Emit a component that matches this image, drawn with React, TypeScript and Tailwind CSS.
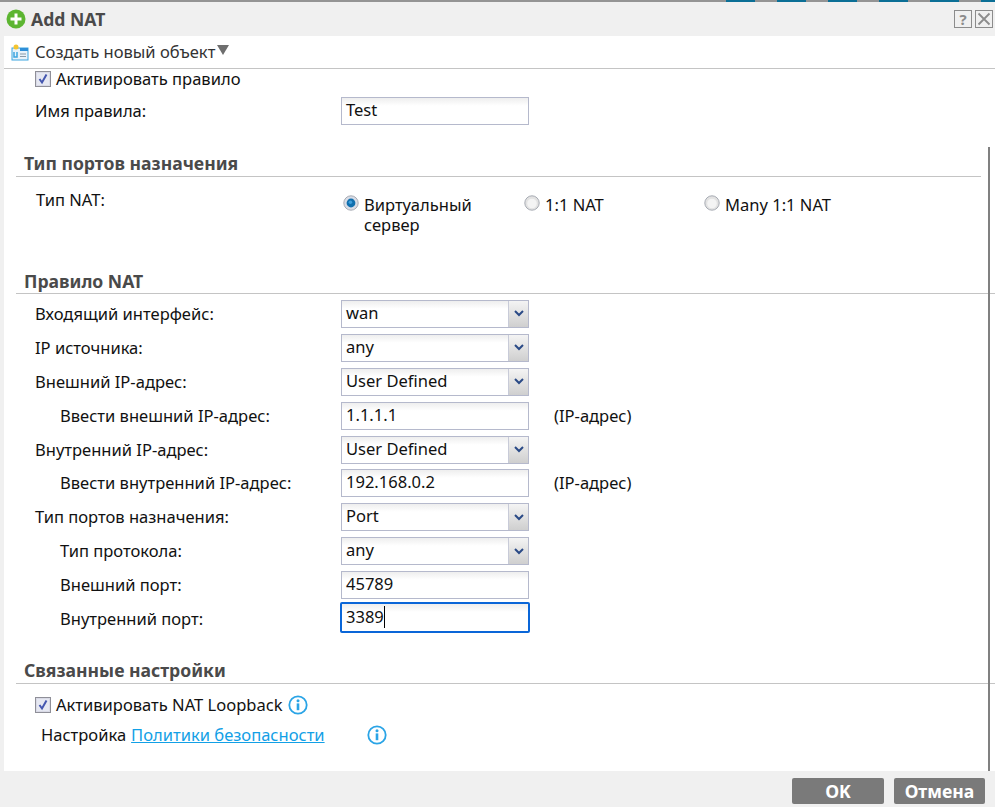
const font = { fontFamily: '"Noto Sans", "Liberation Sans", sans-serif' };

const Section = ({ title, className }: { title: string; className: string }) => (
    <div className={`ml-3 border-b border-[#c4c4c4] pl-2 ${className}`}>
        <div className="text-[17.6px] font-bold leading-[20px] text-[#4a4a4a]">{title}</div>
    </div>
);

const Checkbox = () => (
    <svg width="16" height="16" viewBox="0 0 16 16" className="shrink-0">
        <rect x="0.5" y="0.5" width="15" height="15" fill="#d9dae6" stroke="#8f8f98" />
        <rect x="2" y="2" width="12" height="12" fill="#e6e8f2" />
        <path d="M4.5 8 L7 11.5 L11.5 3.5" fill="none" stroke="#4557b0" strokeWidth="2" />
    </svg>
);

const Radio = ({ on }: { on?: boolean }) => (
    <svg width="16" height="16" viewBox="0 0 16 16" className="shrink-0">
        <circle cx="8" cy="8" r="7.2" fill={on ? "#d8dce6" : "#e2e2e2"} stroke="#a8acb4" />
        {on ? (
            <>
                <circle cx="8" cy="8" r="4.4" fill="#0f6fae" />
                <circle cx="7.4" cy="7.2" r="1.8" fill="#3f9fdc" />
            </>
        ) : (
            <circle cx="8" cy="8.5" r="4.8" fill="#f4f4f4" />
        )}
    </svg>
);

const Info = () => (
    <svg width="20" height="20" viewBox="0 0 20 20" className="shrink-0">
        <circle cx="10" cy="10" r="8.7" fill="none" stroke="#2aa4e6" strokeWidth="1.8" />
        <circle cx="10" cy="5.8" r="1.5" fill="#2aa4e6" />
        <rect x="8.7" y="8.4" width="2.6" height="6.8" fill="#2aa4e6" />
    </svg>
);

const Row = ({ label, sub, children, note }: { label: string; sub?: boolean; children: React.ReactNode; note?: boolean }) => (
    <div className="flex h-[33.9px] items-center">
        <div className={`w-[321px] ${sub ? "pl-[40px]" : "pl-[15px]"}`}>{label}</div>
        {children}
        {note && <span className="ml-[25px]">(IP-адрес)</span>}
    </div>
);

const Input = ({ value }: { value: string }) => (
    <div className="flex h-[28px] w-[188px] items-center border border-[#b5b9cc] bg-gradient-to-b from-[#eeeeee] to-white to-30% pb-[2px] pl-1">
        {value}
    </div>
);

const Select = ({ value }: { value: string }) => (
    <div className="flex h-[28px] w-[188px] items-center border border-[#b5b9cc] bg-gradient-to-b from-[#eeeeee] to-white to-30%">
        <span className="flex-1 pb-[2px] pl-1">{value}</span>
        <span className="flex h-full w-[20px] items-center justify-center border-l border-[#c8cbd8] bg-gradient-to-b from-[#f4f4f4] to-[#cfcfcf]">
            <svg width="10" height="7" viewBox="0 0 10 7">
                <path d="M1 1 L5 5 L9 1" fill="none" stroke="#2a4a86" strokeWidth="2" />
            </svg>
        </span>
    </div>
);

const topStrip = [726, 777, 828, 879, 930, 981];

export default function App() {
    return (
        <div className="flex h-[807px] w-[995px] flex-col overflow-hidden bg-[#f0f0f0] text-[16.55px] leading-[20px] text-[#111]" style={font}>
            {/* top edge of the page behind the dialog */}
            <div className="flex h-[2px] shrink-0 bg-[#949494] pl-[726px]">
                {topStrip.map((x) => (
                    <div key={x} className="mr-[22px] h-full w-[29px] shrink-0 bg-[#0b6f96]"></div>
                ))}
            </div>

            {/* Title bar */}
            <div className="flex h-[34px] shrink-0 items-center pl-[6px] pr-[2px]">
                <svg width="20" height="20" viewBox="0 0 20 20">
                    <circle cx="10" cy="10" r="9.5" fill="#5cb531" />
                    <rect x="4.5" y="8.5" width="11" height="3" fill="#fff" />
                    <rect x="8.5" y="4.5" width="3" height="11" fill="#fff" />
                </svg>
                <span className="ml-[5px] flex-1 text-[17.6px] font-bold text-[#4a4a4a]">Add NAT</span>
                <div className="-mt-[1px] flex gap-[3px]">
                    <div className="flex h-[18px] w-[18px] items-center justify-center border border-[#8c8c8c] text-[15px] font-bold text-[#8c8c8c]">?</div>
                    <svg width="18" height="18" viewBox="0 0 18 18">
                        <rect x="0.5" y="0.5" width="17" height="17" fill="none" stroke="#8c8c8c" />
                        <path d="M3.5 3.5 L14.5 14.5 M14.5 3.5 L3.5 14.5" stroke="#8c8c8c" strokeWidth="1.8" />
                    </svg>
                </div>
            </div>

            <div className="relative ml-[4px] flex h-[735px] shrink-0 flex-col bg-white">
                {/* Toolbar */}
                <div className="flex h-[33px] shrink-0 items-center border-b border-[#c4c4c4] pl-[7px]">
                    <svg width="18" height="18" viewBox="0 0 18 18">
                        <rect x="1" y="5" width="16" height="12" fill="#e8f2fa" stroke="#3da5e0" />
                        <rect x="9" y="5" width="8" height="3" fill="#2f8fd8" />
                        <path d="M3 9 V14 H6 V9" fill="none" stroke="#3da5e0" strokeWidth="1.5" />
                        <path d="M9 11 H15 M9 13.5 H15" stroke="#8a9aa8" />
                        <circle cx="5" cy="4" r="2.5" fill="#f4c430" />
                    </svg>
                    <span className="ml-[6px] text-[#333]">Создать новый объект</span>
                    <svg width="12" height="10" viewBox="0 0 12 10" className="mb-1 ml-[2px]">
                        <path d="M0 0 H12 L6 10 Z" fill="#6e6e6e" />
                    </svg>
                </div>

                {/* Scrollbar */}
                <div className="absolute right-[5px] top-[111px] bottom-0 w-[2px] bg-[#808080]"></div>

                <div className="flex h-[19px] items-center gap-[5px] pl-[31px]">
                    <Checkbox />
                    <span>Активировать правило</span>
                </div>
                <div className="mt-[9px] flex h-[28px] items-center">
                    <div className="w-[337px] pl-[31px]">Имя правила:</div>
                    <Input value="Test" />
                </div>

                <Section title="Тип портов назначения" className="mr-[14px] mt-[28px] pb-[3px]" />

                <div className="mt-[13px] flex">
                    <div className="w-[339px] pl-[32px]">Тип NAT:</div>
                    <div className="flex w-[181px] gap-[5px] pt-[5px]">
                        <Radio on />
                        <span className="w-[130px]">Виртуальный сервер</span>
                    </div>
                    <div className="flex w-[180px] gap-[5px] pt-[5px]">
                        <Radio />
                        <span>1:1 NAT</span>
                    </div>
                    <div className="flex gap-[5px] pt-[5px]">
                        <Radio />
                        <span>Many 1:1 NAT</span>
                    </div>
                </div>

                <Section title="Правило NAT" className="mt-[36px] pb-[2px]" />

                <div className="mt-[3px] pl-[16px]">
                    <Row label="Входящий интерфейс:"><Select value="wan" /></Row>
                    <Row label="IP источника:"><Select value="any" /></Row>
                    <Row label="Внешний IP-адрес:"><Select value="User Defined" /></Row>
                    <Row label="Ввести внешний IP-адрес:" sub note><Input value="1.1.1.1" /></Row>
                    <Row label="Внутренний IP-адрес:"><Select value="User Defined" /></Row>
                    <Row label="Ввести внутренний IP-адрес:" sub note><Input value="192.168.0.2" /></Row>
                    <Row label="Тип портов назначения:"><Select value="Port" /></Row>
                    <Row label="Тип протокола:" sub><Select value="any" /></Row>
                    <Row label="Внешний порт:" sub><Input value="45789" /></Row>
                    <Row label="Внутренний порт:" sub>
                        <div className="-ml-[1px] -mt-[3px] flex h-[31px] w-[190px] items-center rounded-[2px] border-2 border-[#0a66d8] bg-gradient-to-b from-[#eeeeee] to-white to-30% pl-1">
                            3389<span className="h-[22px] w-px bg-black"></span>
                        </div>
                    </Row>
                </div>

                <Section title="Связанные настройки" className="mt-[24px] pb-[3px]" />

                <div className="mt-[11px] flex h-[20px] items-center gap-[5px] pl-[31px]">
                    <Checkbox />
                    <span>Активировать NAT Loopback</span>
                    <Info />
                </div>
                <div className="mt-[10px] flex h-[20px] items-center pl-[37px]">
                    <span>Настройка</span>
                    <a className="ml-[5px] w-[236px] text-[#12a0e6] underline">Политики безопасности</a>
                    <Info />
                </div>
            </div>

            {/* Footer buttons */}
            <div className="flex h-[38px] shrink-0 items-center justify-end gap-[10px] pr-[10px] pt-[2px]">
                <button className="h-[26px] w-[92px] rounded-[2px] bg-[#7a7a7a] text-[17.6px] font-bold text-white">OK</button>
                <button className="h-[26px] w-[91px] rounded-[2px] bg-[#7a7a7a] text-[17.6px] font-bold text-white">Отмена</button>
            </div>
        </div>
    );
}
